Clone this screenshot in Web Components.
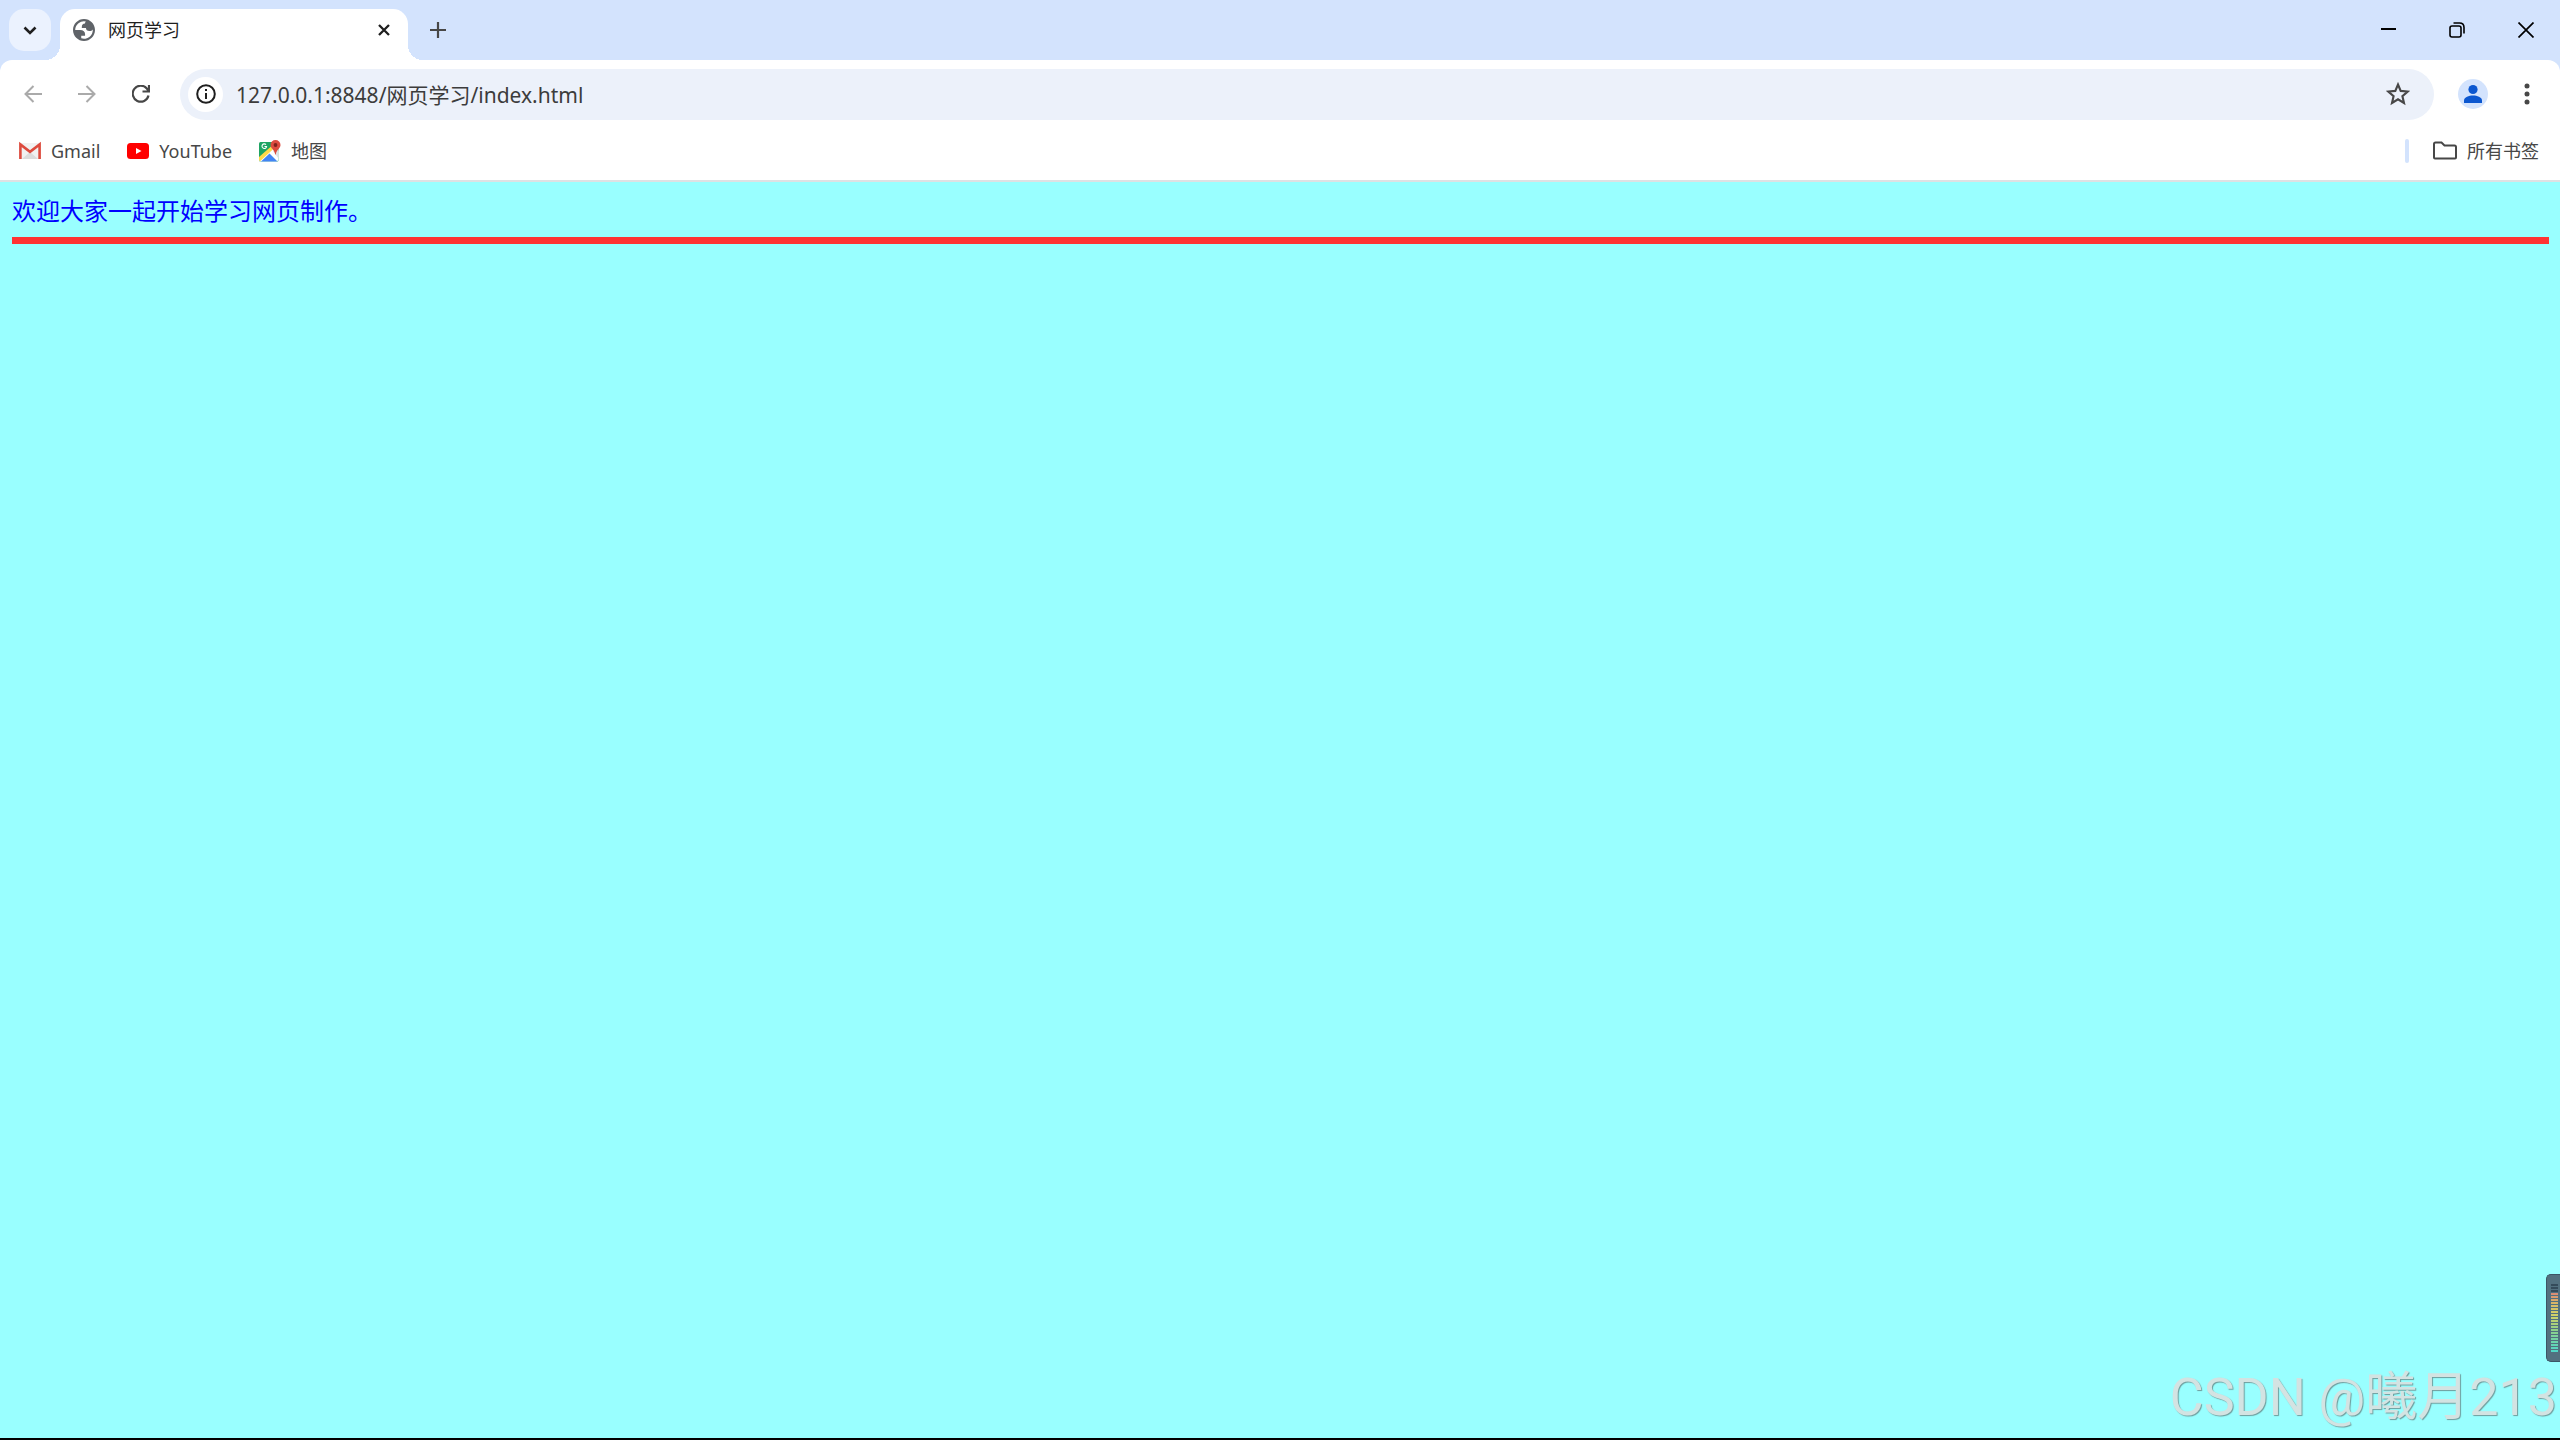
<!DOCTYPE html>
<html lang="zh-CN">
<head>
<meta charset="utf-8">
<title>网页学习</title>
<style>
  body {
    margin: 0;
    min-height: 100vh;
    display: flex;
    flex-direction: column;
    font-family: "Noto Sans", "Noto Sans CJK SC", sans-serif;
    font-size: 18px;
    color: #474747;
    background: #fff;
  }
</style>
</head>
<body>
<tab-strip>
  <browser-tab>网页学习</browser-tab>
</tab-strip>
<tool-bar url="127.0.0.1:8848/网页学习/index.html"></tool-bar>
<bookmark-bar>
  <bookmark-item icon="gmail">Gmail</bookmark-item>
  <bookmark-item icon="youtube">YouTube</bookmark-item>
  <bookmark-item icon="maps">地图</bookmark-item>
  <bookmark-item icon="folder" slot="end">所有书签</bookmark-item>
</bookmark-bar>
<page-view>欢迎大家一起开始学习网页制作。</page-view>
<level-meter></level-meter>
<water-mark>CSDN @曦月213</water-mark>

<script>
const reset = /*css*/ `
  :host, *, *::before, *::after { box-sizing: border-box; }
  svg { display: block; flex: none; }
  button {
    display: flex;
    align-items: center;
    justify-content: center;
    flex: none;
    padding: 0;
    border: 0;
    background: none;
    color: inherit;
    font: inherit;
  }
`;

const icons = {
  gmail: `<svg width="22" height="22" viewBox="0 0 22 22">
    <path d="M1 3h20v16H1z" fill="#f1f1f1"/>
    <path d="M3 19l8-7 8 7z" fill="#dcdcdc"/>
    <path d="M1.4 19V4.4L11 11.8l9.6-7.4V19" fill="none" stroke="#dd4b3e" stroke-width="2.6"/>
  </svg>`,
  youtube: `<svg width="22" height="22" viewBox="0 0 22 22">
    <rect y="3" width="22" height="16" rx="3.5" fill="#f00"/>
    <path d="M9 8l5.5 3L9 14z" fill="#fff"/>
  </svg>`,
  maps: `<svg width="22" height="22" viewBox="0 0 22 22">
    <rect y="2" width="19.5" height="19.5" rx="1.5" fill="#1fa463"/>
    <path d="M0 18.5L13 7l6.5 4v9l-1.5 1.5H1.5L0 20z" fill="#fff"/>
    <path d="M0 17L12 6.500l1.800 3L1 21.300 0 20z" fill="#ffd94a"/>
    <path d="M2 21.500l8.500-8 8 8z" fill="#4285f4"/>
    <path d="M14 11l5.500 7.500V9z" fill="#dfe1e5"/>
    <path d="M7 4.600A2.300 2.300 0 1 0 7.600 6.500H5.500" fill="none" stroke="#fff" stroke-width="1.100"/>
    <path d="M16.500 0a5 5 0 0 0-5 5c0 3.600 4.200 4.600 4.700 9.500h.6C17.300 9.600 21.500 8.600 21.500 5a5 5 0 0 0-5-5z" fill="#dd4b3e"/>
    <circle cx="16.500" cy="5" r="1.900" fill="#7f231c"/>
  </svg>`,
  folder: `<svg width="24" height="22" viewBox="0 0 24 22">
    <path d="M2.500 2.500h6l3 3h10q1.500 0 1.500 1.500v10.500q0 1-1 1H2q-1 0-1-1V4q0-1.500 1.500-1.500z" fill="none" stroke="#474747" stroke-width="2"/>
  </svg>`
};

// fills the shadow root of a custom element
function render(el, html) {
  const template = document.createElement('template');
  template.innerHTML = html;
  el.attachShadow({ mode: 'open' }).appendChild(template.content.cloneNode(true));
}

class TabStrip extends HTMLElement {
  connectedCallback() {
    render(this, /*html*/ `
<style>
  ${reset}
  :host {
    display: flex;
    align-items: center;
    height: 60px;
    padding-left: 9px;
    background: #d3e3fd;
    color: #1f1f1f;
  }
  .search {
    width: 42px;
    height: 42px;
    margin-right: -6px;
    border-radius: 15px;
    background: #ebf2fe;
  }
  .new { width: 42px; height: 42px; margin-left: -6px; color: #474747; }
  .window { display: flex; margin-left: auto; color: #000; }
  .window button { width: 69px; height: 60px; }
</style>
<button class="search" aria-label="搜索标签页">
  <svg width="14" height="14" viewBox="0 0 14 14"><path d="M1.500 4.500L7 10l5.500-5.500" fill="none" stroke="currentColor" stroke-width="2.600"/></svg>
</button>
<slot></slot>
<button class="new" aria-label="新建标签页">
  <svg width="16" height="16" viewBox="0 0 16 16"><path d="M8 0v16M0 8h16" stroke="currentColor" stroke-width="2.200"/></svg>
</button>
<div class="window">
  <button aria-label="最小化"><svg width="16" height="16" viewBox="0 0 16 16"><path d="M1 7h15" stroke="currentColor" stroke-width="2"/></svg></button>
  <button aria-label="还原"><svg width="16" height="16" viewBox="0 0 16 16"><g fill="none" stroke="currentColor" stroke-width="1.600"><rect x="1" y="4" width="11" height="11" rx="2"/><path d="M4.500 1h6Q15 1 15 5.500v6"/></g></svg></button>
  <button aria-label="关闭"><svg width="16" height="16" viewBox="0 0 16 16"><path d="M.5.500l15 15M15.500.500l-15 15" stroke="currentColor" stroke-width="1.700"/></svg></button>
</div>`);
  }
}

class BrowserTab extends HTMLElement {
  connectedCallback() {
    render(this, /*html*/ `
<style>
  ${reset}
  :host {
    display: flex;
    align-items: flex-end;
    align-self: flex-end;
  }
  .curve { width: 15px; height: 15px; }
  .left { background: radial-gradient(circle at 0 0, transparent 15px, #fff 15px); }
  .right { background: radial-gradient(circle at 100% 0, transparent 15px, #fff 15px); }
  .tab {
    display: flex;
    align-items: center;
    gap: 13px;
    width: 348px;
    height: 51px;
    padding: 0 12px 9px 13px;
    border-radius: 15px 15px 0 0;
    background: #fff;
  }
  .title { flex: 1; line-height: 24px; }
  button { width: 24px; height: 24px; }
</style>
<span class="curve left"></span>
<div class="tab">
  <svg width="22" height="22" viewBox="2 2 20 20">
    <path fill="#5f6368" fill-rule="evenodd" d="M12 2c5.520 0 10 4.480 10 10s-4.480 10-10 10S2 17.520 2 12 6.480 2 12 2zM4 12h4.400c3.407.022 4.922 1.730 4.543 5.127H9.488v2.470a8.004 8.004 0 0 0 10.498-8.083C19.327 12.504 18.332 13 17 13c-2.137 0-3.206-.916-3.206-2.750h-3.748c-.274-2.728.683-4.092 2.870-4.092 0-.975.327-1.597.811-1.970A8.004 8.004 0 0 0 4 12z"/>
  </svg>
  <span class="title"><slot></slot></span>
  <button aria-label="关闭标签页">
    <svg width="12" height="12" viewBox="0 0 12 12"><path d="M1 1l10 10M11 1L1 11" stroke="currentColor" stroke-width="2.300"/></svg>
  </button>
</div>
<span class="curve right"></span>`);
  }
}

class ToolBar extends HTMLElement {
  connectedCallback() {
    render(this, /*html*/ `
<style>
  ${reset}
  :host {
    display: block;
    background: #d3e3fd;
  }
  .bar {
    display: flex;
    align-items: center;
    height: 68px;
    padding: 0 6px;
    border-radius: 12px 12px 0 0;
    background: #fff;
  }
  .nav { width: 54px; height: 51px; }
  .nav[disabled] { color: #aaa; }
  .omnibox {
    display: flex;
    align-items: center;
    flex: 1;
    height: 51px;
    margin: 0 12px;
    padding: 0 8px;
    border-radius: 26px;
    background: #ecf1fa;
  }
  .info {
    width: 35px;
    height: 35px;
    border-radius: 50%;
    background: #fff;
    color: #1f1f1f;
  }
  input {
    flex: 1;
    min-width: 0;
    height: 40px;
    padding: 0 13px;
    border: 0;
    outline: 0;
    background: none;
    color: #3c3c3c;
    font: inherit;
    font-size: 21px;
  }
  .star { width: 56px; height: 40px; }
</style>
<div class="bar">
  <button class="nav" disabled aria-label="后退"><svg width="18" height="18" viewBox="0 0 18 18"><path d="M18 9H1.500M9.500 1l-8 8 8 8" fill="none" stroke="currentColor" stroke-width="2"/></svg></button>
  <button class="nav" disabled aria-label="前进"><svg width="18" height="18" viewBox="0 0 18 18"><path d="M0 9h16.500M8.500 1l8 8-8 8" fill="none" stroke="currentColor" stroke-width="2"/></svg></button>
  <button class="nav" aria-label="重新加载"><svg width="18" height="18" viewBox="0 0 18 18"><path d="M16.500 10.500A8 8 0 1 1 14.800 3.500l2 2.500M17 0v6.500h-6.500" fill="none" stroke="currentColor" stroke-width="2.200"/></svg></button>
  <div class="omnibox">
    <button class="info" aria-label="查看网站信息"><svg width="20" height="20" viewBox="0 0 20 20"><circle cx="10" cy="10" r="8.800" fill="none" stroke="currentColor" stroke-width="2"/><path d="M10 9v6M10 5v2" stroke="currentColor" stroke-width="2"/></svg></button>
    <input type="text" aria-label="地址和搜索栏" spellcheck="false">
    <button class="star" aria-label="为此标签页添加书签"><svg width="24" height="24" viewBox="0 0 24 24"><path d="M12 2.500l2.700 6.400 7 .6-5.300 4.600 1.600 6.900-6-3.700L6 21l1.600-6.900-5.300-4.600 7-.6z" fill="none" stroke="currentColor" stroke-width="2.100"/></svg></button>
  </div>
  <button class="nav" aria-label="个人资料"><svg width="30" height="30" viewBox="0 0 30 30"><circle cx="15" cy="15" r="15" fill="#d3e3fd"/><circle cx="15" cy="10.500" r="4.600" fill="#0b57d0"/><path d="M6 24v-2.500C6 18 11 16.500 15 16.500s9 1.500 9 5V24z" fill="#0b57d0"/></svg></button>
  <button class="nav" aria-label="菜单"><svg width="6" height="22" viewBox="0 0 6 22"><g fill="currentColor"><circle cx="3" cy="3" r="2.500"/><circle cx="3" cy="11" r="2.500"/><circle cx="3" cy="19" r="2.500"/></g></svg></button>
</div>`);
    this.shadowRoot.querySelector('input').value = this.getAttribute('url');
  }
}

class BookmarkBar extends HTMLElement {
  connectedCallback() {
    render(this, /*html*/ `
<style>
  ${reset}
  :host {
    display: flex;
    align-items: center;
    gap: 27px;
    height: 54px;
    padding: 0 21px 6px 19px;
    border-bottom: 2px solid #dfe1e3;
    background: #fff;
  }
  .divider {
    width: 4px;
    height: 24px;
    margin-left: auto;
    margin-right: -3px;
    border-radius: 2px;
    background: #d3e3fd;
  }
</style>
<slot></slot>
<span class="divider"></span>
<slot name="end"></slot>`);
  }
}

class BookmarkItem extends HTMLElement {
  connectedCallback() {
    render(this, /*html*/ `
<style>
  ${reset}
  :host { display: block; }
  a {
    display: flex;
    align-items: center;
    gap: 10px;
    color: inherit;
    line-height: 24px;
    text-decoration: none;
  }
</style>
<a href="#">${icons[this.getAttribute('icon')]}<span><slot></slot></span></a>`);
  }
}

class PageView extends HTMLElement {
  connectedCallback() {
    render(this, /*html*/ `
<style>
  ${reset}
  :host {
    display: block;
    flex: 1;
    padding: 12px 11px 12px 12px;
    border-bottom: 2px solid #000;
    background: #9ff;
    color: #00f;
    font-family: "Noto Sans CJK SC", sans-serif;
    font-size: 24px;
    line-height: 32px;
  }
  hr {
    height: 7px;
    margin: 11px 0 12px;
    border: 0;
    background: #f33;
  }
</style>
<slot></slot>
<hr>`);
  }
}

// volume overlay docked on the right edge of the screen
class LevelMeter extends HTMLElement {
  connectedCallback() {
    render(this, /*html*/ `
<style>
  ${reset}
  :host {
    position: absolute;
    right: 0;
    bottom: 78px;
    width: 14px;
    height: 88px;
    padding: 9px 2px 9px 4px;
    border: 1px solid #3b5566;
    border-right: 0;
    border-radius: 5px 0 0 5px;
    background: #52707f;
  }
  .levels {
    height: 68px;
    background:
      repeating-linear-gradient(transparent 0 2px, #52707f 2px 3px),
      linear-gradient(#344b5a 9px, #d98a75 9px, #d8b967 20px, #cfd268 32px, #8fd28a 46px, #4fd6c8);
  }
</style>
<div class="levels"></div>`);
  }
}

class WaterMark extends HTMLElement {
  connectedCallback() {
    render(this, /*html*/ `
<style>
  :host {
    position: absolute;
    right: 3px;
    bottom: 10px;
    color: #d3e3e2;
    font-family: Roboto, "Noto Sans CJK SC", sans-serif;
    font-size: 52px;
    line-height: 64px;
    white-space: nowrap;
    text-shadow: 1px 1px 1px #6f9c9c;
  }
</style>
<slot></slot>`);
  }
}

customElements.define('tab-strip', TabStrip);
customElements.define('browser-tab', BrowserTab);
customElements.define('tool-bar', ToolBar);
customElements.define('bookmark-bar', BookmarkBar);
customElements.define('bookmark-item', BookmarkItem);
customElements.define('page-view', PageView);
customElements.define('level-meter', LevelMeter);
customElements.define('water-mark', WaterMark);
</script>
</body>
</html>
